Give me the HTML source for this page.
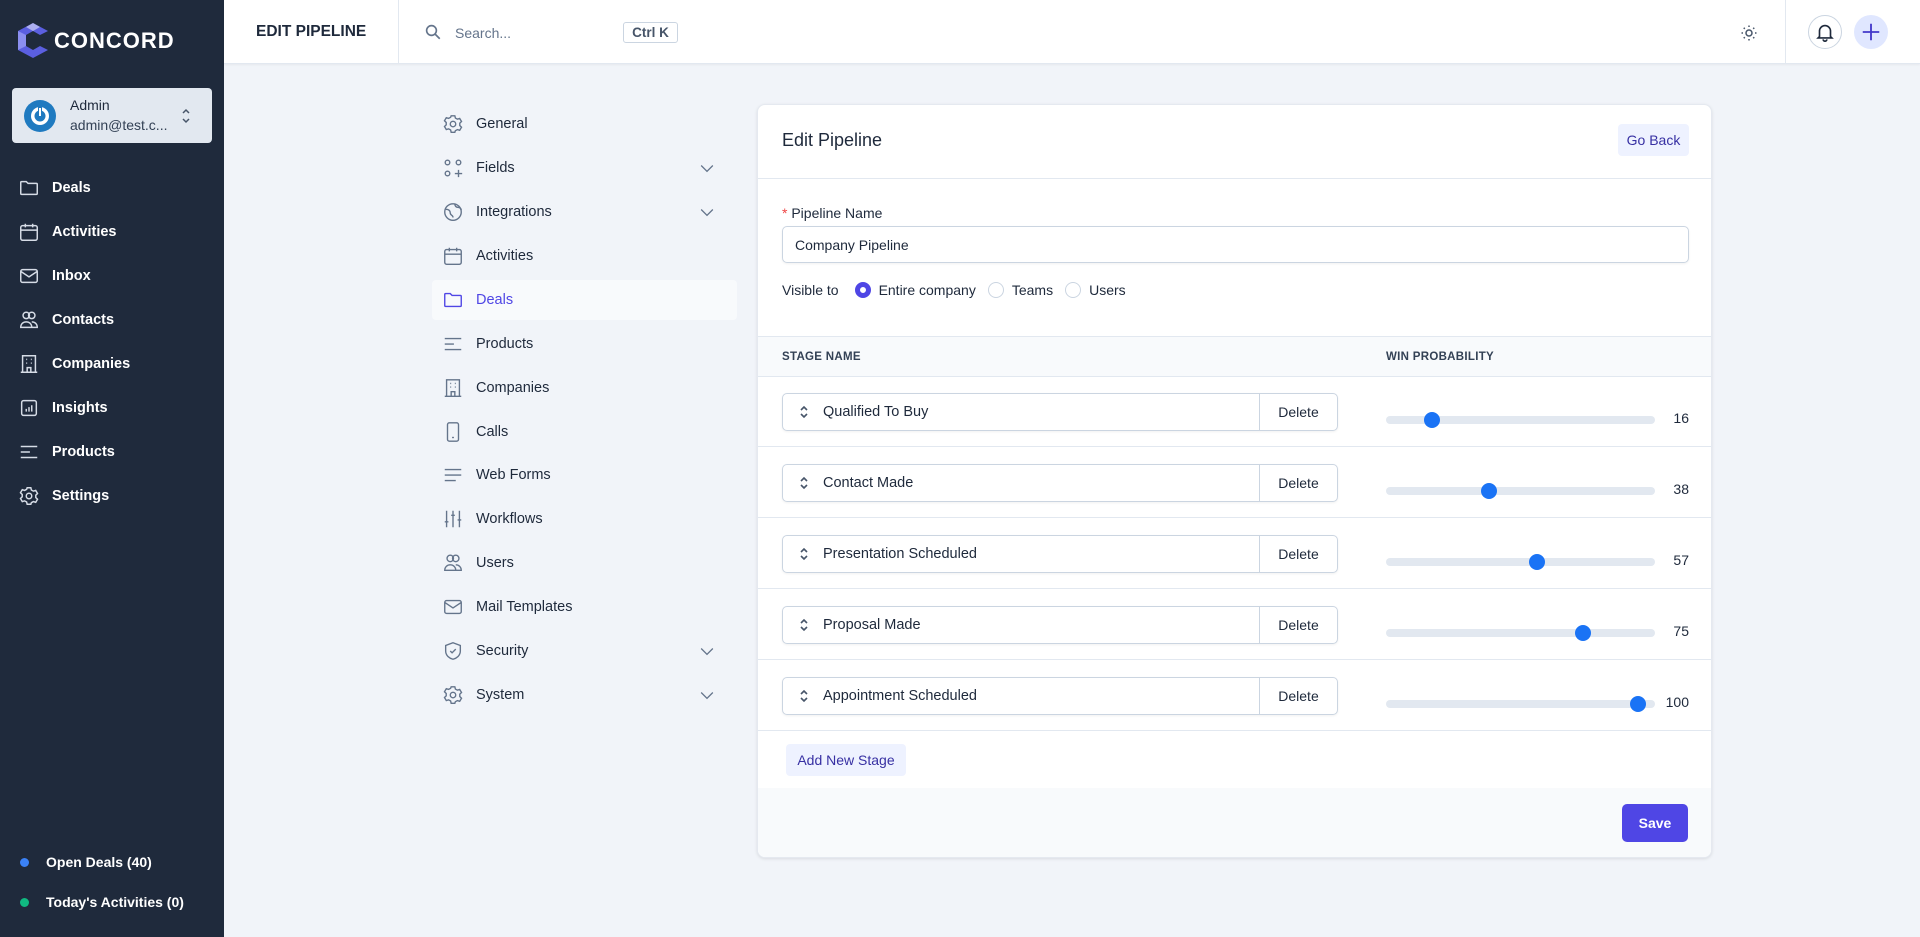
<!DOCTYPE html>
<html><head><meta charset="utf-8"><style>
*{box-sizing:border-box;margin:0;padding:0}
body{width:1920px;height:937px;background:#f1f4f9;font-family:"Liberation Sans",sans-serif;color:#1e293b;position:relative;overflow:hidden}
.abs{position:absolute}
.sb{left:0;top:0;width:224px;height:937px;background:#1f2a3c}
.nav{position:absolute;left:18px;display:flex;align-items:center;color:#fff;font-weight:bold;font-size:14.5px}
.nav svg{width:22px;height:22px;margin-right:12px;stroke:#d6dce6;fill:none;stroke-width:1.6}
.hdr{left:224px;top:0;right:0;height:64px;background:#fff;border-bottom:1px solid #e2e8f0;box-shadow:0 1px 2px rgba(0,0,0,.05)}
.menu{position:absolute;left:432px;width:305px;height:40px;display:flex;align-items:center;padding-left:10px;font-size:14.5px;color:#1e293b}
.menu svg{width:22px;height:22px;margin-right:12px;stroke:#64748b;fill:none;stroke-width:1.5}
.menu .chev{position:absolute;right:20px;width:20px;height:20px;margin:0}
.card{left:757px;top:104px;width:955px;height:754px;background:#fff;border-radius:8px;box-shadow:0 1px 3px rgba(0,0,0,.1);border:1px solid #e5e9f0;overflow:hidden}
.row{position:absolute;left:0;width:955px;height:71px;border-bottom:1px solid #e2e8f0}
.inp{position:absolute;left:24px;top:17px;width:556px;height:38px;border:1px solid #cbd5e1;border-radius:5px;box-shadow:0 1px 2px rgba(0,0,0,.06);font-size:14.5px;display:flex;align-items:center}
.inp .del{position:absolute;right:0;top:0;bottom:0;width:78px;border-left:1px solid #cbd5e1;display:flex;align-items:center;justify-content:center;font-size:14px}
.inp svg{width:14px;height:14px;margin:0 12px 0 14px;stroke:#475569;fill:none;stroke-width:1.6}
.track{position:absolute;left:628px;top:40px;width:269px;height:8px;border-radius:4px;background:#e2e8f0}
.thumb{position:absolute;top:-4px;width:16px;height:16px;border-radius:50%;background:#1a73f5;margin-left:-8px}
.val{position:absolute;right:24px;top:34px;font-size:14px}
</style></head><body>
<div class="abs sb">
 <svg class="abs" style="left:18px;top:23px" width="30" height="35" viewBox="0 0 30 35"><path d="M15 0 L30 8 L22 12 L15 8 L8 12 L8 23 L15 27 L22 23 L30 27 L15 35 L0 27 L0 8Z" fill="#5b5fe0"/><path d="M0 8 L8 12 L8 23 L0 27Z" fill="#8b8ff0"/><path d="M15 0 L22 4 L15 8 L8 4Z" fill="#fff" opacity=".5"/></svg>
 <div class="abs" style="left:54px;top:28px;color:#fff;font-size:22px;font-weight:bold;letter-spacing:1px">CONCORD</div>
 <div class="abs" style="left:12px;top:88px;width:200px;height:55px;background:#e2e8f0;border-radius:4px"></div>
 <div class="abs" style="left:24px;top:100px;width:32px;height:32px;border-radius:50%;background:#1f7ac0"></div>
 <svg class="abs" style="left:24px;top:100px" width="32" height="32" viewBox="0 0 32 32"><circle cx="16" cy="16" r="9" fill="#fff"/><circle cx="16" cy="16" r="5.5" fill="#1f7ac0"/><rect x="14" y="6" width="4" height="10" fill="#1f7ac0"/><rect x="15" y="8" width="2" height="8" fill="#fff"/></svg>
 <div class="abs" style="left:70px;top:97px;font-size:14px;color:#1e293b">Admin</div>
 <div class="abs" style="left:70px;top:117px;font-size:14px;color:#334155">admin@test.c...</div>
 <svg class="abs" style="left:180px;top:107px" width="12" height="18" viewBox="0 0 12 18" fill="none" stroke="#475569" stroke-width="1.5"><path d="M3 6l3-3 3 3M3 12l3 3 3-3"/></svg>

 <div class="nav" style="top:177px"><svg viewBox="0 0 24 24"><path d="M3 6a1 1 0 011-1h5l2 2h9a1 1 0 011 1v10a1 1 0 01-1 1H4a1 1 0 01-1-1z"/></svg>Deals</div>
 <div class="nav" style="top:221px"><svg viewBox="0 0 24 24"><rect x="3" y="5" width="18" height="16" rx="2"/><path d="M3 10h18M8 3v4M16 3v4"/></svg>Activities</div>
 <div class="nav" style="top:265px"><svg viewBox="0 0 24 24"><rect x="3" y="5" width="18" height="14" rx="2"/><path d="M3 7l9 6 9-6"/></svg>Inbox</div>
 <div class="nav" style="top:309px"><svg viewBox="0 0 24 24"><circle cx="9" cy="7" r="3.5"/><circle cx="15" cy="7" r="3.5"/><path d="M3 20c0-4 3-6 6-6s6 2 6 6zM15 14c3 0 6 2 6 6h-6"/></svg>Contacts</div>
 <div class="nav" style="top:353px"><svg viewBox="0 0 24 24"><path d="M5 21V3h14v18M3 21h18M9 7h1M14 7h1M9 11h1M14 11h1M10 21v-5h4v5"/></svg>Companies</div>
 <div class="nav" style="top:397px"><svg viewBox="0 0 24 24"><rect x="4" y="4" width="16" height="16" rx="2"/><path d="M9 16v-3M12 16v-5M15 16v-7"/></svg>Insights</div>
 <div class="nav" style="top:441px"><svg viewBox="0 0 24 24"><path d="M3 6h18M3 12h10M3 18h18"/></svg>Products</div>
 <div class="nav" style="top:485px"><svg viewBox="0 0 24 24"><circle cx="12" cy="12" r="3"/><path d="M10 3h4l.6 2.5 2.2 1.2 2.5-.8 2 3.4-1.9 1.8v2.6l1.9 1.8-2 3.4-2.5-.8-2.2 1.2L14 21h-4l-.6-2.5-2.2-1.2-2.5.8-2-3.4 1.9-1.8v-2.6L2.7 8.5l2-3.4 2.5.8 2.2-1.2z"/></svg>Settings</div>

 <div class="abs" style="left:20px;top:858px;width:9px;height:9px;border-radius:50%;background:#3b82f6"></div>
 <div class="abs" style="left:46px;top:854px;color:#fff;font-weight:bold;font-size:14px">Open Deals (40)</div>
 <div class="abs" style="left:20px;top:898px;width:9px;height:9px;border-radius:50%;background:#10b981"></div>
 <div class="abs" style="left:46px;top:894px;color:#fff;font-weight:bold;font-size:14px">Today's Activities (0)</div>
</div>

<div class="abs hdr">
 <div class="abs" style="left:32px;top:23px;font-size:15.5px;font-weight:bold;color:#1e293b">EDIT PIPELINE</div>
 <div class="abs" style="left:174px;top:0;width:1px;height:64px;background:#e2e8f0"></div>
 <svg class="abs" style="left:200px;top:23px" width="18" height="18" viewBox="0 0 24 24" fill="none" stroke="#64748b" stroke-width="2.2"><circle cx="10" cy="10" r="6.5"/><path d="M15 15l6 6"/></svg>
 <div class="abs" style="left:231px;top:25px;font-size:14px;color:#64748b">Search...</div>
 <div class="abs" style="left:399px;top:22px;width:55px;height:21px;border:1px solid #cbd5e1;border-radius:3px;font-size:13.5px;font-weight:bold;color:#475569;text-align:center;line-height:19px">Ctrl K</div>
 <svg class="abs" style="left:1516px;top:24px" width="18" height="18" viewBox="0 0 24 24" fill="none" stroke="#475569" stroke-width="2"><circle cx="12" cy="12" r="4"/><path d="M12 2v2M12 20v2M2 12h2M20 12h2M5 5l1.4 1.4M17.6 17.6L19 19M5 19l1.4-1.4M17.6 6.4L19 5"/></svg>
 <div class="abs" style="left:1561px;top:0;width:1px;height:64px;background:#e2e8f0"></div>
 <div class="abs" style="left:1584px;top:15px;width:34px;height:34px;border-radius:50%;border:1px solid #cbd5e1"></div>
 <svg class="abs" style="left:1590px;top:21px" width="22" height="22" viewBox="0 0 24 24" fill="none" stroke="#1e293b" stroke-width="1.8"><path d="M6 17V11a6 6 0 0112 0v6l1.5 1.5h-15zM10 20a2 2 0 004 0"/></svg>
 <div class="abs" style="left:1630px;top:15px;width:34px;height:34px;border-radius:50%;background:#e0e7ff"></div>
 <svg class="abs" style="left:1636px;top:21px" width="22" height="22" viewBox="0 0 24 24" fill="none" stroke="#4338ca" stroke-width="2"><path d="M12 3v18M3 12h18"/></svg>
</div>

<div class="menu" style="top:104px"><svg viewBox="0 0 24 24"><circle cx="12" cy="12" r="3"/><path d="M10 3h4l.6 2.5 2.2 1.2 2.5-.8 2 3.4-1.9 1.8v2.6l1.9 1.8-2 3.4-2.5-.8-2.2 1.2L14 21h-4l-.6-2.5-2.2-1.2-2.5.8-2-3.4 1.9-1.8v-2.6L2.7 8.5l2-3.4 2.5.8 2.2-1.2z"/></svg>General</div>
<div class="menu" style="top:148px"><svg viewBox="0 0 24 24"><circle cx="6" cy="6" r="2.5"/><circle cx="18" cy="6" r="2.5"/><circle cx="6" cy="18" r="2.5"/><path d="M18 14v8M14 18h8"/></svg>Fields<svg class="chev" viewBox="0 0 24 24"><path d="M5 9l7 7 7-7"/></svg></div>
<div class="menu" style="top:192px"><svg viewBox="0 0 24 24"><circle cx="12" cy="12" r="9"/><path d="M4 9c3 0 5 1 5 4s3 2 3 5M14 3c0 3 2 4 4 4s3 2 3 3"/></svg>Integrations<svg class="chev" viewBox="0 0 24 24"><path d="M5 9l7 7 7-7"/></svg></div>
<div class="menu" style="top:236px"><svg viewBox="0 0 24 24"><rect x="3" y="5" width="18" height="16" rx="2"/><path d="M3 10h18M8 3v4M16 3v4"/></svg>Activities</div>
<div class="menu" style="top:280px;background:#f8fafc;border-radius:4px;color:#4f46e5"><svg viewBox="0 0 24 24" style="stroke:#4f46e5"><path d="M3 6a1 1 0 011-1h5l2 2h9a1 1 0 011 1v10a1 1 0 01-1 1H4a1 1 0 01-1-1z"/></svg>Deals</div>
<div class="menu" style="top:324px"><svg viewBox="0 0 24 24"><path d="M3 6h18M3 12h10M3 18h18"/></svg>Products</div>
<div class="menu" style="top:368px"><svg viewBox="0 0 24 24"><path d="M5 21V3h14v18M3 21h18M9 7h1M14 7h1M9 11h1M14 11h1M10 21v-5h4v5"/></svg>Companies</div>
<div class="menu" style="top:412px"><svg viewBox="0 0 24 24"><rect x="6" y="2" width="12" height="20" rx="2"/><path d="M11 18h2"/></svg>Calls</div>
<div class="menu" style="top:455px"><svg viewBox="0 0 24 24"><path d="M3 6h18M3 12h18M3 18h12"/></svg>Web Forms</div>
<div class="menu" style="top:499px"><svg viewBox="0 0 24 24"><path d="M5 3v18M12 3v18M19 3v18M3 15h4M10 8h4M17 13h4"/></svg>Workflows</div>
<div class="menu" style="top:543px"><svg viewBox="0 0 24 24"><circle cx="9" cy="7" r="3.5"/><circle cx="15" cy="7" r="3.5"/><path d="M3 20c0-4 3-6 6-6s6 2 6 6zM15 14c3 0 6 2 6 6h-6"/></svg>Users</div>
<div class="menu" style="top:587px"><svg viewBox="0 0 24 24"><rect x="3" y="5" width="18" height="14" rx="2"/><path d="M3 7l9 6 9-6"/></svg>Mail Templates</div>
<div class="menu" style="top:631px"><svg viewBox="0 0 24 24"><path d="M12 3l8 3v6c0 5-4 8-8 9-4-1-8-4-8-9V6z"/><path d="M9 12l2 2 4-4"/></svg>Security<svg class="chev" viewBox="0 0 24 24"><path d="M5 9l7 7 7-7"/></svg></div>
<div class="menu" style="top:675px"><svg viewBox="0 0 24 24"><circle cx="12" cy="12" r="3"/><path d="M10 3h4l.6 2.5 2.2 1.2 2.5-.8 2 3.4-1.9 1.8v2.6l1.9 1.8-2 3.4-2.5-.8-2.2 1.2L14 21h-4l-.6-2.5-2.2-1.2-2.5.8-2-3.4 1.9-1.8v-2.6L2.7 8.5l2-3.4 2.5.8 2.2-1.2z"/></svg>System<svg class="chev" viewBox="0 0 24 24"><path d="M5 9l7 7 7-7"/></svg></div>

<div class="abs card">
 <div class="abs" style="left:24px;top:25px;font-size:18px;color:#1e293b">Edit Pipeline</div>
 <div class="abs" style="left:860px;top:19px;width:71px;height:32px;background:#eef2ff;border-radius:4px;font-size:14px;color:#3730a3;text-align:center;line-height:32px">Go Back</div>
 <div class="abs" style="left:0;top:73px;width:955px;height:1px;background:#e2e8f0"></div>
 <div class="abs" style="left:24px;top:100px;font-size:14px;color:#1e293b"><span style="color:#ef4444">*</span> Pipeline Name</div>
 <div class="abs" style="left:24px;top:121px;width:907px;height:37px;border:1px solid #cbd5e1;border-radius:5px;box-shadow:0 1px 2px rgba(0,0,0,.06);font-size:14px;padding-left:12px;line-height:36px">Company Pipeline</div>
 <div class="abs" style="left:24px;top:177px;font-size:14px;display:flex;align-items:center;white-space:nowrap">Visible to
  <span style="display:inline-block;width:16px;height:16px;border-radius:50%;border:5px solid #4f46e5;margin:0 8px 0 16px"></span>Entire company
  <span style="display:inline-block;width:16px;height:16px;border-radius:50%;border:1px solid #cbd5e1;margin:0 8px 0 12px"></span>Teams
  <span style="display:inline-block;width:16px;height:16px;border-radius:50%;border:1px solid #cbd5e1;margin:0 8px 0 12px"></span>Users</div>
 <div class="abs" style="left:0;top:231px;width:955px;height:41px;background:#f8fafc;border-top:1px solid #e2e8f0;border-bottom:1px solid #e2e8f0"></div>
 <div class="abs" style="left:24px;top:246px;font-size:11.5px;font-weight:bold;color:#334155;letter-spacing:.3px">STAGE NAME</div>
 <div class="abs" style="left:628px;top:246px;font-size:11.5px;font-weight:bold;color:#334155;letter-spacing:.3px">WIN PROBABILITY</div>

 <div class="row" style="top:271px"><div class="inp"><svg viewBox="0 0 14 14"><path d="M4 5l3-3 3 3M4 9l3 3 3-3"/></svg>Qualified To Buy<div class="del">Delete</div></div><div class="track"><div class="thumb" style="left:46px"></div></div><div class="val">16</div></div>
 <div class="row" style="top:342px"><div class="inp"><svg viewBox="0 0 14 14"><path d="M4 5l3-3 3 3M4 9l3 3 3-3"/></svg>Contact Made<div class="del">Delete</div></div><div class="track"><div class="thumb" style="left:103px"></div></div><div class="val">38</div></div>
 <div class="row" style="top:413px"><div class="inp"><svg viewBox="0 0 14 14"><path d="M4 5l3-3 3 3M4 9l3 3 3-3"/></svg>Presentation Scheduled<div class="del">Delete</div></div><div class="track"><div class="thumb" style="left:151px"></div></div><div class="val">57</div></div>
 <div class="row" style="top:484px"><div class="inp"><svg viewBox="0 0 14 14"><path d="M4 5l3-3 3 3M4 9l3 3 3-3"/></svg>Proposal Made<div class="del">Delete</div></div><div class="track"><div class="thumb" style="left:197px"></div></div><div class="val">75</div></div>
 <div class="row" style="top:555px"><div class="inp"><svg viewBox="0 0 14 14"><path d="M4 5l3-3 3 3M4 9l3 3 3-3"/></svg>Appointment Scheduled<div class="del">Delete</div></div><div class="track"><div class="thumb" style="left:252px"></div></div><div class="val">100</div></div>

 <div class="abs" style="left:28px;top:639px;width:120px;height:32px;background:#eef2ff;border-radius:4px;font-size:14px;color:#3730a3;text-align:center;line-height:32px">Add New Stage</div>
 <div class="abs" style="left:0;top:683px;width:955px;height:71px;background:#f8fafc"></div>
 <div class="abs" style="left:864px;top:699px;width:66px;height:38px;background:#4f46e5;border-radius:5px;color:#fff;font-size:14px;font-weight:bold;text-align:center;line-height:38px">Save</div>
</div>
</body></html>
